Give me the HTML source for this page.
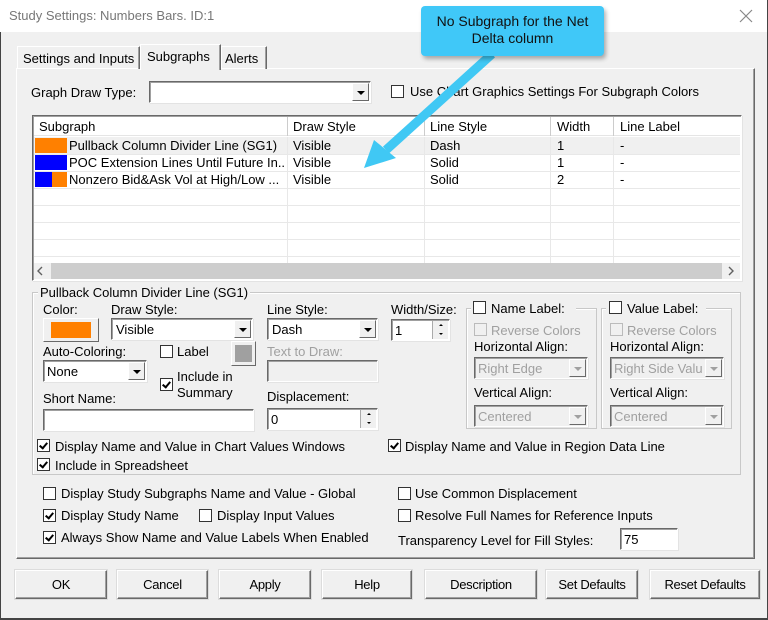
<!DOCTYPE html>
<html><head><meta charset="utf-8"><style>
*{box-sizing:border-box;margin:0;padding:0}
body{width:768px;height:620px;overflow:hidden;background:#f0f0f0;font-family:"Liberation Sans",Arial,sans-serif;font-size:13px;color:#000;position:relative}
.a{position:absolute}
.t{position:absolute;white-space:nowrap;line-height:15px;font-size:13px}
.g{color:#a0a0a0}
.cb{position:absolute;width:13px;height:13px;background:#fff;border:1px solid #333;}
.cb.dis{border-color:#bbb;background:#f0f0f0}
.ck::after{content:"";position:absolute;left:3px;top:1px;width:3px;height:6px;border:solid #000;border-width:0 2px 2px 0;transform:rotate(40deg)}
.sunk{position:absolute;background:#fff;border:1px solid;border-color:#696969 #fff #fff #696969;box-shadow:inset 1px 1px 0 #a0a0a0,1px 1px 0 #e3e3e3}
.sunk.dis{background:#f0f0f0}
.dd{position:absolute;right:1px;top:1px;bottom:1px;width:17px;background:#f0f0f0;border:1px solid;border-color:#fff #696969 #696969 #fff}
.dd::after{content:"";position:absolute;left:4px;top:7px;border:4px solid transparent;border-top:4px solid #000;border-bottom:0}
.dis .dd::after{border-top-color:#a0a0a0}
.btn{position:absolute;height:29px;background:#f0f0f0;border:1px solid;border-color:#fff #696969 #696969 #fff;box-shadow:inset -1px -1px 0 #a0a0a0,0 0 0 1px #dcdcdc;text-align:center;line-height:27px;font-size:13px;letter-spacing:-0.3px}
.grp{position:absolute;border:1px solid #c8c8c8;box-shadow:inset 1px 1px 0 #fff}
.cell{position:absolute;white-space:nowrap;overflow:hidden;line-height:17px}
.spn{position:absolute;right:1px;top:1px;width:16px;height:18px;background:#f0f0f0;border-left:1px solid #aaa}
.spn::before{content:"";position:absolute;left:6px;top:3px;border:2px solid transparent;border-bottom:2px solid #000;border-top:0}
.spn::after{content:"";position:absolute;left:6px;top:12px;border:2px solid transparent;border-top:2px solid #000;border-bottom:0}
</style></head><body>
<div class="a" style="left:0;top:0;width:768px;height:32px;background:#fff"></div>
<div class="t" style="left:9px;top:8px;color:#777">Study Settings: Numbers Bars. ID:1</div>
<svg class="a" style="left:739px;top:9px" width="14" height="14"><path d="M1 1L13 13M13 1L1 13" stroke="#888" stroke-width="1.2"/></svg>
<div class="a" style="left:0;top:32px;width:1px;height:588px;background:#444"></div>
<div class="a" style="right:0;top:0;width:1px;height:620px;background:#444"></div>
<div class="a" style="left:0;bottom:0;width:768px;height:2px;background:#444"></div>

<div class="a" style="left:16px;top:68px;width:739px;height:491px;border:1px solid;border-color:#fff #696969 #696969 #fff;box-shadow:inset -1px -1px 0 #a0a0a0"></div>
<div class="a" style="left:17px;top:46px;width:123px;height:23px;border:1px solid;border-bottom:0;border-color:#fff #696969 #fff #fff;box-shadow:inset -1px 0 0 #a0a0a0"></div>
<div class="t" style="left:23px;top:51px">Settings and Inputs</div>
<div class="a" style="left:140px;top:44px;width:81px;height:26px;background:#f0f0f0;border:1px solid;border-bottom:0;border-color:#fff #696969 #fff #fff;box-shadow:inset -1px 0 0 #a0a0a0"></div>
<div class="t" style="left:147px;top:49px">Subgraphs</div>
<div class="a" style="left:221px;top:46px;width:46px;height:23px;border:1px solid;border-bottom:0;border-color:#fff #696969 #fff #fff;box-shadow:inset -1px 0 0 #a0a0a0"></div>
<div class="t" style="left:225px;top:51px">Alerts</div>

<div class="t" style="left:31px;top:85px">Graph Draw Type:</div>
<div class="sunk" style="left:149px;top:81px;width:222px;height:22px"><div class="dd"></div></div>
<div class="cb" style="left:391px;top:85px"></div>
<div class="t" style="left:410px;top:84px">Use Chart Graphics Settings For Subgraph Colors</div>

<div class="sunk" style="left:32px;top:115px;width:710px;height:166px"></div>
<div class="a" style="left:34px;top:117px;width:706px;height:19px;background:#fff;border-bottom:1px solid #e5e5e5"></div>
<div class="a" style="left:287px;top:117px;width:1px;height:19px;background:#ccc"></div>
<div class="a" style="left:424px;top:117px;width:1px;height:19px;background:#ccc"></div>
<div class="a" style="left:550px;top:117px;width:1px;height:19px;background:#ccc"></div>
<div class="a" style="left:613px;top:117px;width:1px;height:19px;background:#ccc"></div>
<div class="t" style="left:39px;top:119px">Subgraph</div>
<div class="t" style="left:293px;top:119px">Draw Style</div>
<div class="t" style="left:430px;top:119px">Line Style</div>
<div class="t" style="left:557px;top:119px">Width</div>
<div class="t" style="left:620px;top:119px">Line Label</div>
<div class="a" style="left:34px;top:137px;width:706px;height:17px;background:#f0f0f0"></div>
<svg class="a" style="left:34px;top:137px" width="706" height="126">
<g stroke="#e8e8e8" stroke-width="1">
<path d="M0 17.5H706M0 34.5H706M0 51.5H706M0 68.5H706M0 85.5H706M0 102.5H706M0 119.5H706"/>
<path d="M253.5 0V126M390.5 0V126M516.5 0V126M579.5 0V126"/>
</g></svg>
<div class="a" style="left:35px;top:138px;width:32px;height:15px;background:#ff8000"></div>
<div class="a" style="left:35px;top:155px;width:32px;height:15px;background:#0000ff"></div>
<div class="a" style="left:35px;top:172px;width:17px;height:15px;background:#0000ff"></div>
<div class="a" style="left:52px;top:172px;width:15px;height:15px;background:#ff8000"></div>
<div class="cell" style="left:69px;top:137px;width:216px">Pullback Column Divider Line (SG1)</div>
<div class="cell" style="left:69px;top:154px;width:216px">POC Extension Lines Until Future In...</div>
<div class="cell" style="left:69px;top:171px;width:216px">Nonzero Bid&amp;Ask Vol at High/Low ...</div>
<div class="cell" style="left:293px;top:137px">Visible</div>
<div class="cell" style="left:293px;top:154px">Visible</div>
<div class="cell" style="left:293px;top:171px">Visible</div>
<div class="cell" style="left:430px;top:137px">Dash</div>
<div class="cell" style="left:430px;top:154px">Solid</div>
<div class="cell" style="left:430px;top:171px">Solid</div>
<div class="cell" style="left:557px;top:137px">1</div>
<div class="cell" style="left:557px;top:154px">1</div>
<div class="cell" style="left:557px;top:171px">2</div>
<div class="cell" style="left:620px;top:137px">-</div>
<div class="cell" style="left:620px;top:154px">-</div>
<div class="cell" style="left:620px;top:171px">-</div>
<div class="a" style="left:34px;top:263px;width:706px;height:16px;background:#f0f0f0"></div>
<div class="a" style="left:51px;top:263px;width:671px;height:16px;background:#cdcdcd"></div>
<svg class="a" style="left:36px;top:266px" width="10" height="10"><path d="M6 1L2 5L6 9" stroke="#606060" stroke-width="1.4" fill="none"/></svg>
<svg class="a" style="left:726px;top:266px" width="10" height="10"><path d="M3 1L7 5L3 9" stroke="#606060" stroke-width="1.4" fill="none"/></svg>

<div class="grp" style="left:32px;top:292px;width:709px;height:183px"></div>
<div class="t" style="left:38px;top:285px;background:#f0f0f0;padding:0 2px">Pullback Column Divider Line (SG1)</div>
<div class="t" style="left:43px;top:302px">Color:</div>
<div class="a" style="left:43px;top:318px;width:56px;height:24px;border:1px solid;border-color:#fff #696969 #696969 #fff"><div class="a" style="left:7px;top:3px;width:40px;height:16px;background:#ff8000"></div></div>
<div class="t" style="left:111px;top:302px">Draw Style:</div>
<div class="sunk" style="left:111px;top:318px;width:142px;height:22px"><div class="t" style="left:4px;top:3px">Visible</div><div class="dd"></div></div>
<div class="t" style="left:267px;top:302px">Line Style:</div>
<div class="sunk" style="left:267px;top:318px;width:111px;height:22px"><div class="t" style="left:4px;top:3px">Dash</div><div class="dd"></div></div>
<div class="t" style="left:391px;top:302px">Width/Size:</div>
<div class="sunk" style="left:391px;top:319px;width:59px;height:22px"><div class="t" style="left:3px;top:3px">1</div><div class="spn"></div></div>
<div class="grp" style="left:466px;top:308px;width:131px;height:121px"></div>
<div class="a" style="left:471px;top:300px;width:105px;height:16px;background:#f0f0f0"></div>
<div class="cb" style="left:473px;top:301px"></div>
<div class="t" style="left:491px;top:301px">Name Label:</div>
<div class="cb dis" style="left:474px;top:323px"></div>
<div class="t g" style="left:491px;top:323px">Reverse Colors</div>
<div class="t" style="left:474px;top:339px">Horizontal Align:</div>
<div class="sunk dis" style="left:474px;top:357px;width:114px;height:22px"><div class="t g" style="left:3px;top:3px">Right Edge</div><div class="dd"></div></div>
<div class="t" style="left:474px;top:385px">Vertical Align:</div>
<div class="sunk dis" style="left:474px;top:405px;width:114px;height:22px"><div class="t g" style="left:3px;top:3px">Centered</div><div class="dd"></div></div>
<div class="grp" style="left:601px;top:308px;width:131px;height:121px"></div>
<div class="a" style="left:606px;top:300px;width:100px;height:16px;background:#f0f0f0"></div>
<div class="cb" style="left:609px;top:301px"></div>
<div class="t" style="left:627px;top:301px">Value Label:</div>
<div class="cb dis" style="left:610px;top:323px"></div>
<div class="t g" style="left:627px;top:323px">Reverse Colors</div>
<div class="t" style="left:610px;top:339px">Horizontal Align:</div>
<div class="sunk dis" style="left:610px;top:357px;width:114px;height:22px;overflow:hidden"><div class="t g" style="left:3px;top:3px">Right Side Valu</div><div class="dd"></div></div>
<div class="t" style="left:610px;top:385px">Vertical Align:</div>
<div class="sunk dis" style="left:610px;top:405px;width:114px;height:22px"><div class="t g" style="left:3px;top:3px">Centered</div><div class="dd"></div></div>

<div class="t" style="left:43px;top:344px">Auto-Coloring:</div>
<div class="sunk" style="left:43px;top:360px;width:104px;height:22px"><div class="t" style="left:3px;top:3px">None</div><div class="dd"></div></div>
<div class="cb" style="left:160px;top:345px"></div>
<div class="t" style="left:177px;top:344px">Label</div>
<div class="a" style="left:231px;top:341px;width:25px;height:25px;border:1px solid;border-color:#fff #696969 #696969 #fff"><div class="a" style="left:3px;top:3px;width:17px;height:17px;background:#a0a0a0"></div></div>
<div class="t g" style="left:267px;top:344px">Text to Draw:</div>
<div class="sunk dis" style="left:267px;top:360px;width:111px;height:22px"></div>
<div class="cb ck" style="left:160px;top:378px"></div>
<div class="t" style="left:177px;top:369px">Include in</div>
<div class="t" style="left:177px;top:385px">Summary</div>
<div class="t" style="left:43px;top:391px">Short Name:</div>
<div class="sunk" style="left:43px;top:409px;width:211px;height:22px"></div>
<div class="t" style="left:267px;top:389px">Displacement:</div>
<div class="sunk" style="left:267px;top:408px;width:111px;height:22px"><div class="t" style="left:3px;top:3px">0</div><div class="spn"></div></div>
<div class="cb ck" style="left:37px;top:439px"></div>
<div class="t" style="left:55px;top:439px">Display Name and Value in Chart Values Windows</div>
<div class="cb ck" style="left:388px;top:439px"></div>
<div class="t" style="left:405px;top:439px">Display Name and Value in Region Data Line</div>
<div class="cb ck" style="left:37px;top:458px"></div>
<div class="t" style="left:55px;top:458px">Include in Spreadsheet</div>

<div class="cb" style="left:43px;top:487px"></div>
<div class="t" style="left:61px;top:486px">Display Study Subgraphs Name and Value - Global</div>
<div class="cb" style="left:398px;top:487px"></div>
<div class="t" style="left:415px;top:486px">Use Common Displacement</div>
<div class="cb ck" style="left:43px;top:509px"></div>
<div class="t" style="left:61px;top:508px">Display Study Name</div>
<div class="cb" style="left:199px;top:509px"></div>
<div class="t" style="left:217px;top:508px">Display Input Values</div>
<div class="cb" style="left:398px;top:509px"></div>
<div class="t" style="left:415px;top:508px">Resolve Full Names for Reference Inputs</div>
<div class="cb ck" style="left:43px;top:531px"></div>
<div class="t" style="left:61px;top:530px">Always Show Name and Value Labels When Enabled</div>
<div class="t" style="left:398px;top:533px">Transparency Level for Fill Styles:</div>
<div class="sunk" style="left:620px;top:528px;width:58px;height:22px"><div class="t" style="left:3px;top:3px">75</div></div>

<div class="btn" style="left:15px;top:570px;width:92px">OK</div>
<div class="btn" style="left:117px;top:570px;width:91px">Cancel</div>
<div class="btn" style="left:219px;top:570px;width:92px">Apply</div>
<div class="btn" style="left:322px;top:570px;width:90px">Help</div>
<div class="btn" style="left:425px;top:570px;width:112px">Description</div>
<div class="btn" style="left:546px;top:570px;width:92px">Set Defaults</div>
<div class="btn" style="left:650px;top:570px;width:110px">Reset Defaults</div>

<svg class="a" style="left:340px;top:40px" width="180" height="140">
<path d="M152 14L46 110" stroke="#40c8f4" stroke-width="9" fill="none"/>
<path d="M24 128L34 100L56 118Z" fill="#40c8f4"/>
</svg>
<div class="a" style="left:421px;top:6px;width:183px;height:50px;background:#40c8f8;border-radius:4px;box-shadow:2px 3px 4px rgba(0,0,0,0.3);text-align:center;font-size:14px;line-height:17px;padding-top:7px;color:#111">No Subgraph for the Net<br>Delta column</div>
</body></html>
